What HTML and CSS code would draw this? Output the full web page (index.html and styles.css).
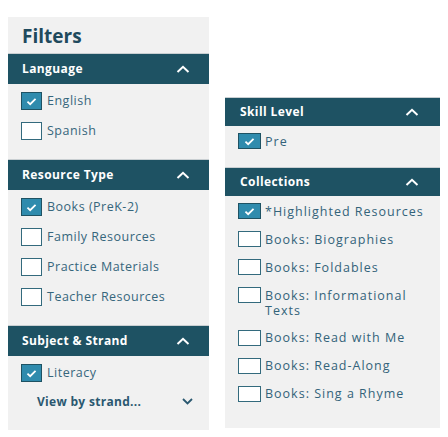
FILE: index.html
```html
<!DOCTYPE html>
<html>
<head>
<meta charset="utf-8">
<link rel="stylesheet" href="styles.css">
</head>
<body>
<div class="page">
  <div class="panel panel-left">
    <div class="title">Filters</div>

    <div class="sec-head"><span>Language</span>
      <svg class="chev" width="14" height="8" viewBox="0 0 14 8"><polyline points="1.5,7 7,1.8 12.5,7" fill="none" stroke="#fff" stroke-width="2"/></svg>
    </div>
    <div class="list">
      <div class="row"><span class="box checked"><svg viewBox="0 0 12 10" width="11" height="9"><polyline points="1.5,5.2 4.5,8 10.5,2" fill="none" stroke="#fff" stroke-width="2"/></svg></span><span class="lbl">English</span></div>
      <div class="row"><span class="box"></span><span class="lbl">Spanish</span></div>
    </div>

    <div class="sec-head"><span>Resource Type</span>
      <svg class="chev" width="14" height="8" viewBox="0 0 14 8"><polyline points="1.5,7 7,1.8 12.5,7" fill="none" stroke="#fff" stroke-width="2"/></svg>
    </div>
    <div class="list">
      <div class="row"><span class="box checked"><svg viewBox="0 0 12 10" width="11" height="9"><polyline points="1.5,5.2 4.5,8 10.5,2" fill="none" stroke="#fff" stroke-width="2"/></svg></span><span class="lbl">Books (PreK-2)</span></div>
      <div class="row"><span class="box"></span><span class="lbl">Family Resources</span></div>
      <div class="row"><span class="box"></span><span class="lbl">Practice Materials</span></div>
      <div class="row"><span class="box"></span><span class="lbl">Teacher Resources</span></div>
    </div>

    <div class="sec-head"><span>Subject &amp; Strand</span>
      <svg class="chev" width="14" height="8" viewBox="0 0 14 8"><polyline points="1.5,7 7,1.8 12.5,7" fill="none" stroke="#fff" stroke-width="2"/></svg>
    </div>
    <div class="list list-last">
      <div class="row"><span class="box checked"><svg viewBox="0 0 12 10" width="11" height="9"><polyline points="1.5,5.2 4.5,8 10.5,2" fill="none" stroke="#fff" stroke-width="2"/></svg></span><span class="lbl">Literacy</span></div>
      <div class="strand"><span>View by strand...</span>
        <svg width="11" height="7" viewBox="0 0 11 7"><polyline points="1,1 5.5,5.5 10,1" fill="none" stroke="#2a5870" stroke-width="1.8"/></svg>
      </div>
    </div>
  </div>

  <div class="panel panel-right">
    <div class="sec-head"><span>Skill Level</span>
      <svg class="chev" width="14" height="8" viewBox="0 0 14 8"><polyline points="1.5,7 7,1.8 12.5,7" fill="none" stroke="#fff" stroke-width="2"/></svg>
    </div>
    <div class="list">
      <div class="row"><span class="box checked"><svg viewBox="0 0 12 10" width="11" height="9"><polyline points="1.5,5.2 4.5,8 10.5,2" fill="none" stroke="#fff" stroke-width="2"/></svg></span><span class="lbl">Pre</span></div>
    </div>

    <div class="sec-head"><span>Collections</span>
      <svg class="chev" width="14" height="8" viewBox="0 0 14 8"><polyline points="1.5,7 7,1.8 12.5,7" fill="none" stroke="#fff" stroke-width="2"/></svg>
    </div>
    <div class="list list-last">
      <div class="row"><span class="box checked"><svg viewBox="0 0 12 10" width="11" height="9"><polyline points="1.5,5.2 4.5,8 10.5,2" fill="none" stroke="#fff" stroke-width="2"/></svg></span><span class="lbl">*Highlighted Resources</span></div>
      <div class="row"><span class="box"></span><span class="lbl">Books: Biographies</span></div>
      <div class="row"><span class="box"></span><span class="lbl">Books: Foldables</span></div>
      <div class="row"><span class="box"></span><span class="lbl">Books: Informational<br>Texts</span></div>
      <div class="row"><span class="box"></span><span class="lbl">Books: Read with Me</span></div>
      <div class="row"><span class="box"></span><span class="lbl">Books: Read-Along</span></div>
      <div class="row"><span class="box"></span><span class="lbl">Books: Sing a Rhyme</span></div>
    </div>
  </div>
</div>
</body>
</html>
```

FILE: styles.css
```css
html, body {
  margin: 0;
  padding: 0;
  background: #ffffff;
}
body {
  font-family: "Open Sans", "Noto Sans", sans-serif;
}
.page {
  display: flex;
  align-items: flex-start;
  gap: 16px;
  padding: 17px 0 0 8px;
}
.panel {
  background: #f1f1f1;
}
.panel-left {
  width: 201px;
}
.panel-right {
  width: 215px;
  margin-top: 80px;
}
.title {
  height: 36px;
  box-sizing: border-box;
  padding: 8px 0 0 14px;
  font-size: 19px;
  line-height: 22px;
  font-weight: 700;
  color: #1f4a5d;
}
.sec-head {
  display: flex;
  align-items: center;
  justify-content: space-between;
  box-sizing: border-box;
  background: #1e5263;
  border-top: 1px solid #c9cfd2;
  color: #ffffff;
  font-weight: 700;
  font-size: 12px;
  letter-spacing: 0.4px;
}
.panel-left .sec-head {
  height: 31px;
  padding: 0 19px 1px 14px;
}
.panel-right .sec-head {
  height: 29px;
  padding: 0 21px 1px 15px;
}
.list {
  display: flex;
  flex-direction: column;
}
.panel-left .list {
  gap: 12px;
  padding: 8px 0 19px 13px;
}
.panel-left .list-last {
  padding-bottom: 20px;
}
.panel-right .list {
  gap: 12px;
  padding: 7px 0 18px 13px;
}
.panel-right .list-last {
  padding-bottom: 26px;
}
.row {
  display: flex;
  align-items: flex-start;
}
.box {
  flex: none;
  box-sizing: border-box;
  display: flex;
  align-items: center;
  justify-content: center;
  background: #ffffff;
  border: 1.5px solid #336a7d;
}
.box.checked {
  background: #2f8bad;
  border-color: #1e5263;
}
.panel-left .box {
  width: 21px;
  height: 18px;
}
.panel-right .box {
  width: 23px;
  height: 16px;
}
.lbl {
  color: #36667c;
  font-weight: 500;
}
.panel-left .lbl {
  margin-left: 5px;
  font-size: 12.5px;
  line-height: 18px;
  letter-spacing: 0.5px;
}
.panel-right .lbl {
  margin-left: 4px;
  font-size: 12.5px;
  line-height: 15px;
  margin-top: 0.5px;
  letter-spacing: 1px;
  color: #33637a;
}
.strand {
  display: flex;
  align-items: center;
  justify-content: space-between;
  height: 18px;
  margin-top: -2px;
  padding: 0 16px 0 16px;
  font-size: 12px;
  font-weight: 700;
  letter-spacing: 0.3px;
  color: #2a5870;
}
```
